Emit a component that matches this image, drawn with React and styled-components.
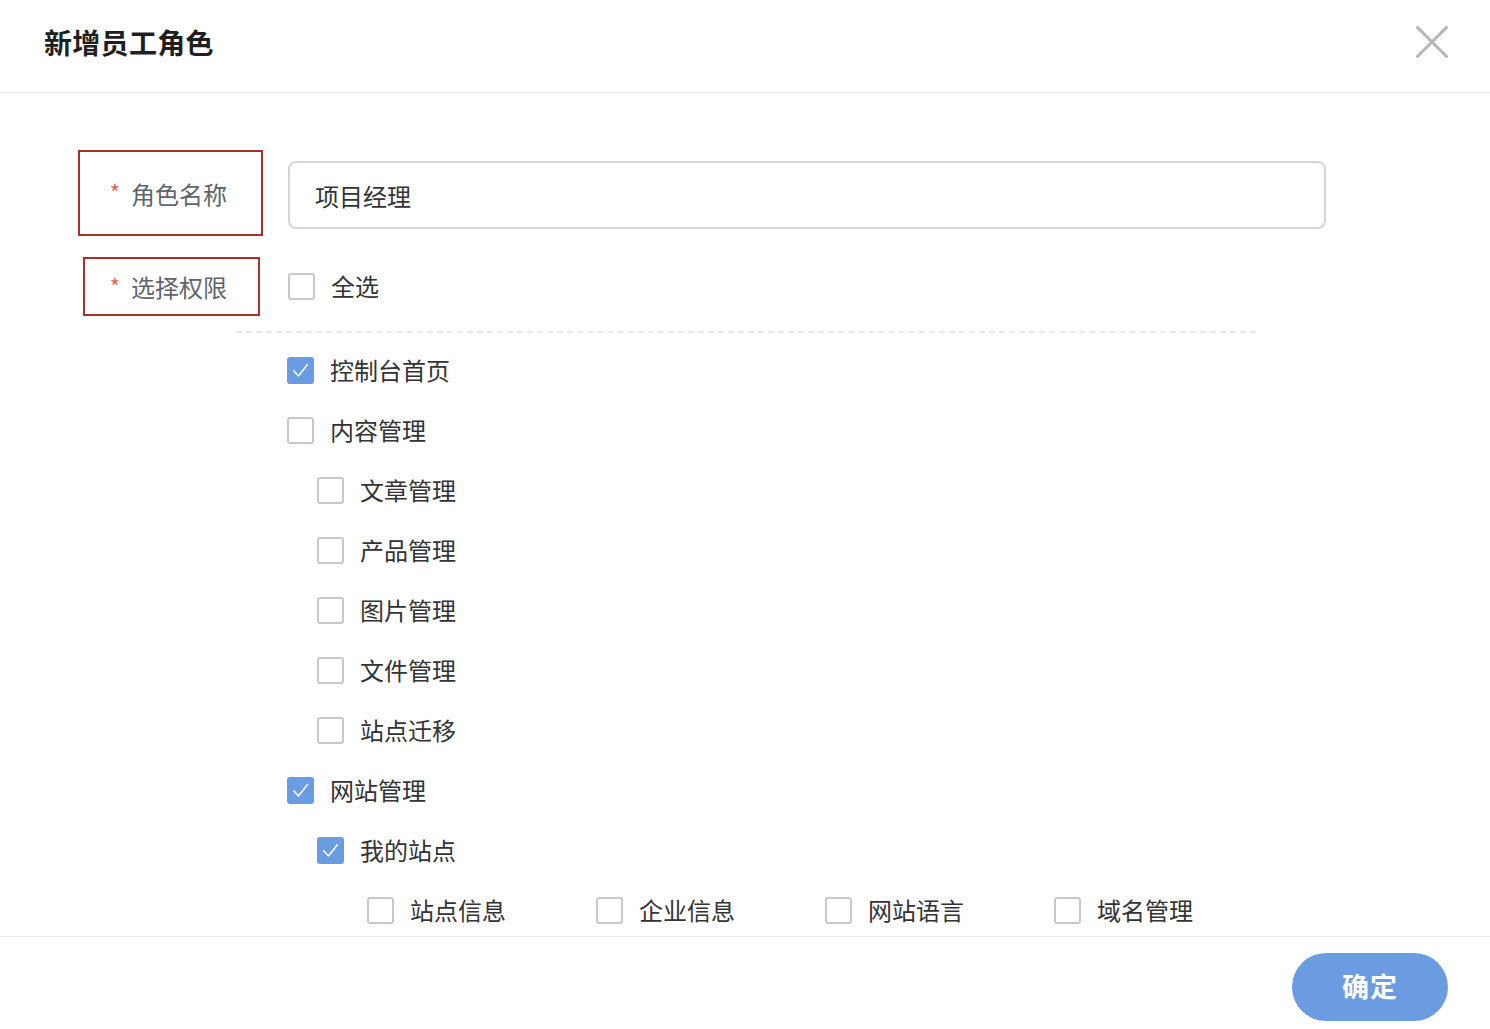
import React from "react";
import styled, { createGlobalStyle } from "styled-components";

const GlobalStyle = createGlobalStyle`
  html, body {
    margin: 0;
    padding: 0;
    background: #fff;
  }
  body {
    font-family: "Noto Sans CJK SC", "Noto Sans", sans-serif;
  }
`;

const Dialog = styled.div`
  width: 1490px;
  height: 1029px;
  display: flex;
  flex-direction: column;
  background: #fff;
  overflow: hidden;
`;

const Header = styled.header`
  height: 93px;
  flex-shrink: 0;
  display: flex;
  align-items: center;
  justify-content: space-between;
  padding: 0 42px 9px 44px;
  box-sizing: border-box;
  border-bottom: 1px solid #e9ebee;
`;

const Title = styled.h1`
  margin: 0;
  font-size: 28px;
  line-height: 1;
  font-weight: 700;
  color: #1f1f1f;
  letter-spacing: 0.3px;
`;

const CloseButton = styled.button`
  width: 32px;
  height: 32px;
  padding: 0;
  border: 0;
  background: none;
  cursor: pointer;
  display: flex;
  align-items: center;
  justify-content: center;
`;

const Body = styled.div`
  flex: 1;
  overflow: hidden;
  padding: 57px 0 0 78px;
`;

const FormRow = styled.div`
  display: flex;
  align-items: center;
  gap: 25px;
  margin-bottom: ${(p) => p.$mb || 0}px;
`;

const LabelCell = styled.div`
  width: 185px;
  flex-shrink: 0;
  display: flex;
`;

const LabelBox = styled.label`
  box-sizing: border-box;
  width: ${(p) => p.$w}px;
  height: ${(p) => p.$h}px;
  margin-left: ${(p) => p.$ml || 0}px;
  border: 2px solid #a8302a;
  display: flex;
  align-items: center;
  justify-content: flex-end;
  padding-right: ${(p) => p.$pr}px;
  font-size: 24px;
  color: #60646b;
`;

const Star = styled.span`
  color: #e3634f;
  font-size: 22px;
  margin-right: 11px;
  position: relative;
  top: -2px;
`;

const TextInput = styled.div`
  box-sizing: border-box;
  width: 1038px;
  height: 68px;
  border: 2px solid #d3d6db;
  border-radius: 8px;
  display: flex;
  align-items: center;
  padding-left: 25px;
  font-size: 24px;
  color: #333;
  margin-top: 4px;
`;

const Divider = styled.div`
  margin: 15px 0 0 158px;
  width: 1020px;
  height: 0;
  border-top: 2px dashed #e8eaed;
`;

const Tree = styled.div`
  padding-top: 7px;
  padding-left: 209px;
`;

const TreeRow = styled.div`
  height: 60px;
  display: flex;
  align-items: center;
  padding-left: ${(p) => p.$indent}px;
`;

const CheckItem = styled.label`
  display: flex;
  align-items: center;
  gap: 16px;
  font-size: 24px;
  color: #333;
  width: ${(p) => (p.$w ? `${p.$w}px` : "auto")};
  flex-shrink: 0;
`;

const CheckText = styled.span`
  position: relative;
  top: -1px;
`;

const Box = styled.span`
  box-sizing: border-box;
  width: 27px;
  height: 27px;
  border-radius: 3px;
  border: 2px solid ${(p) => (p.$checked ? "#6a9ce2" : "#c6c9ce")};
  background: ${(p) => (p.$checked ? "#6a9ce2" : "#fff")};
  display: flex;
  align-items: center;
  justify-content: center;
`;

const Footer = styled.footer`
  height: 93px;
  flex-shrink: 0;
  border-top: 1px solid #eceef1;
  display: flex;
  justify-content: flex-end;
  align-items: flex-start;
  padding: 16px 42px 0 0;
  box-sizing: border-box;
`;

const PrimaryButton = styled.button`
  width: 156px;
  height: 68px;
  border: 0;
  border-radius: 34px;
  background: #6b9be0;
  color: #fff;
  font-family: inherit;
  font-size: 27px;
  line-height: 1;
  font-weight: 700;
  letter-spacing: 1px;
  padding: 0 0 4px;
  cursor: pointer;
`;

const Checkbox = ({ checked, label, width }) => (
  <CheckItem $w={width}>
    <Box $checked={checked}>
      {checked && (
        <svg width="19" height="19" viewBox="0 0 19 19">
          <polyline
            points="2.5,9.5 7.5,15 16.5,3.5"
            fill="none"
            stroke="#fff"
            strokeWidth="1.6"
            strokeLinecap="round"
            strokeLinejoin="round"
          />
        </svg>
      )}
    </Box>
    <CheckText>{label}</CheckText>
  </CheckItem>
);

const tree = [
  { label: "控制台首页", checked: true, level: 0 },
  { label: "内容管理", level: 0 },
  { label: "文章管理", level: 1 },
  { label: "产品管理", level: 1 },
  { label: "图片管理", level: 1 },
  { label: "文件管理", level: 1 },
  { label: "站点迁移", level: 1 },
  { label: "网站管理", checked: true, level: 0 },
  { label: "我的站点", checked: true, level: 1 },
];

const siteItems = ["站点信息", "企业信息", "网站语言", "域名管理"];

export default function App() {
  return (
    <>
      <GlobalStyle />
      <Dialog>
        <Header>
          <Title>新增员工角色</Title>
          <CloseButton aria-label="关闭">
            <svg width="32" height="32" viewBox="0 0 32 32">
              <path
                d="M1.5 1.5 L30.5 30.5 M30.5 1.5 L1.5 30.5"
                stroke="#b3b7bd"
                strokeWidth="3"
                strokeLinecap="round"
              />
            </svg>
          </CloseButton>
        </Header>
        <Body>
          <FormRow $mb={21}>
            <LabelCell>
              <LabelBox $w={185} $h={86} $pr={34}>
                <Star>*</Star>角色名称
              </LabelBox>
            </LabelCell>
            <TextInput>项目经理</TextInput>
          </FormRow>
          <FormRow>
            <LabelCell>
              <LabelBox $w={177} $h={59} $ml={5} $pr={31}>
                <Star>*</Star>选择权限
              </LabelBox>
            </LabelCell>
            <Checkbox label="全选" />
          </FormRow>
          <Divider />
          <Tree>
            {tree.map((n) => (
              <TreeRow key={n.label} $indent={n.level * 30}>
                <Checkbox label={n.label} checked={n.checked} />
              </TreeRow>
            ))}
            <TreeRow $indent={80}>
              {siteItems.map((s) => (
                <Checkbox key={s} label={s} width={229} />
              ))}
            </TreeRow>
          </Tree>
        </Body>
        <Footer>
          <PrimaryButton>确定</PrimaryButton>
        </Footer>
      </Dialog>
    </>
  );
}
